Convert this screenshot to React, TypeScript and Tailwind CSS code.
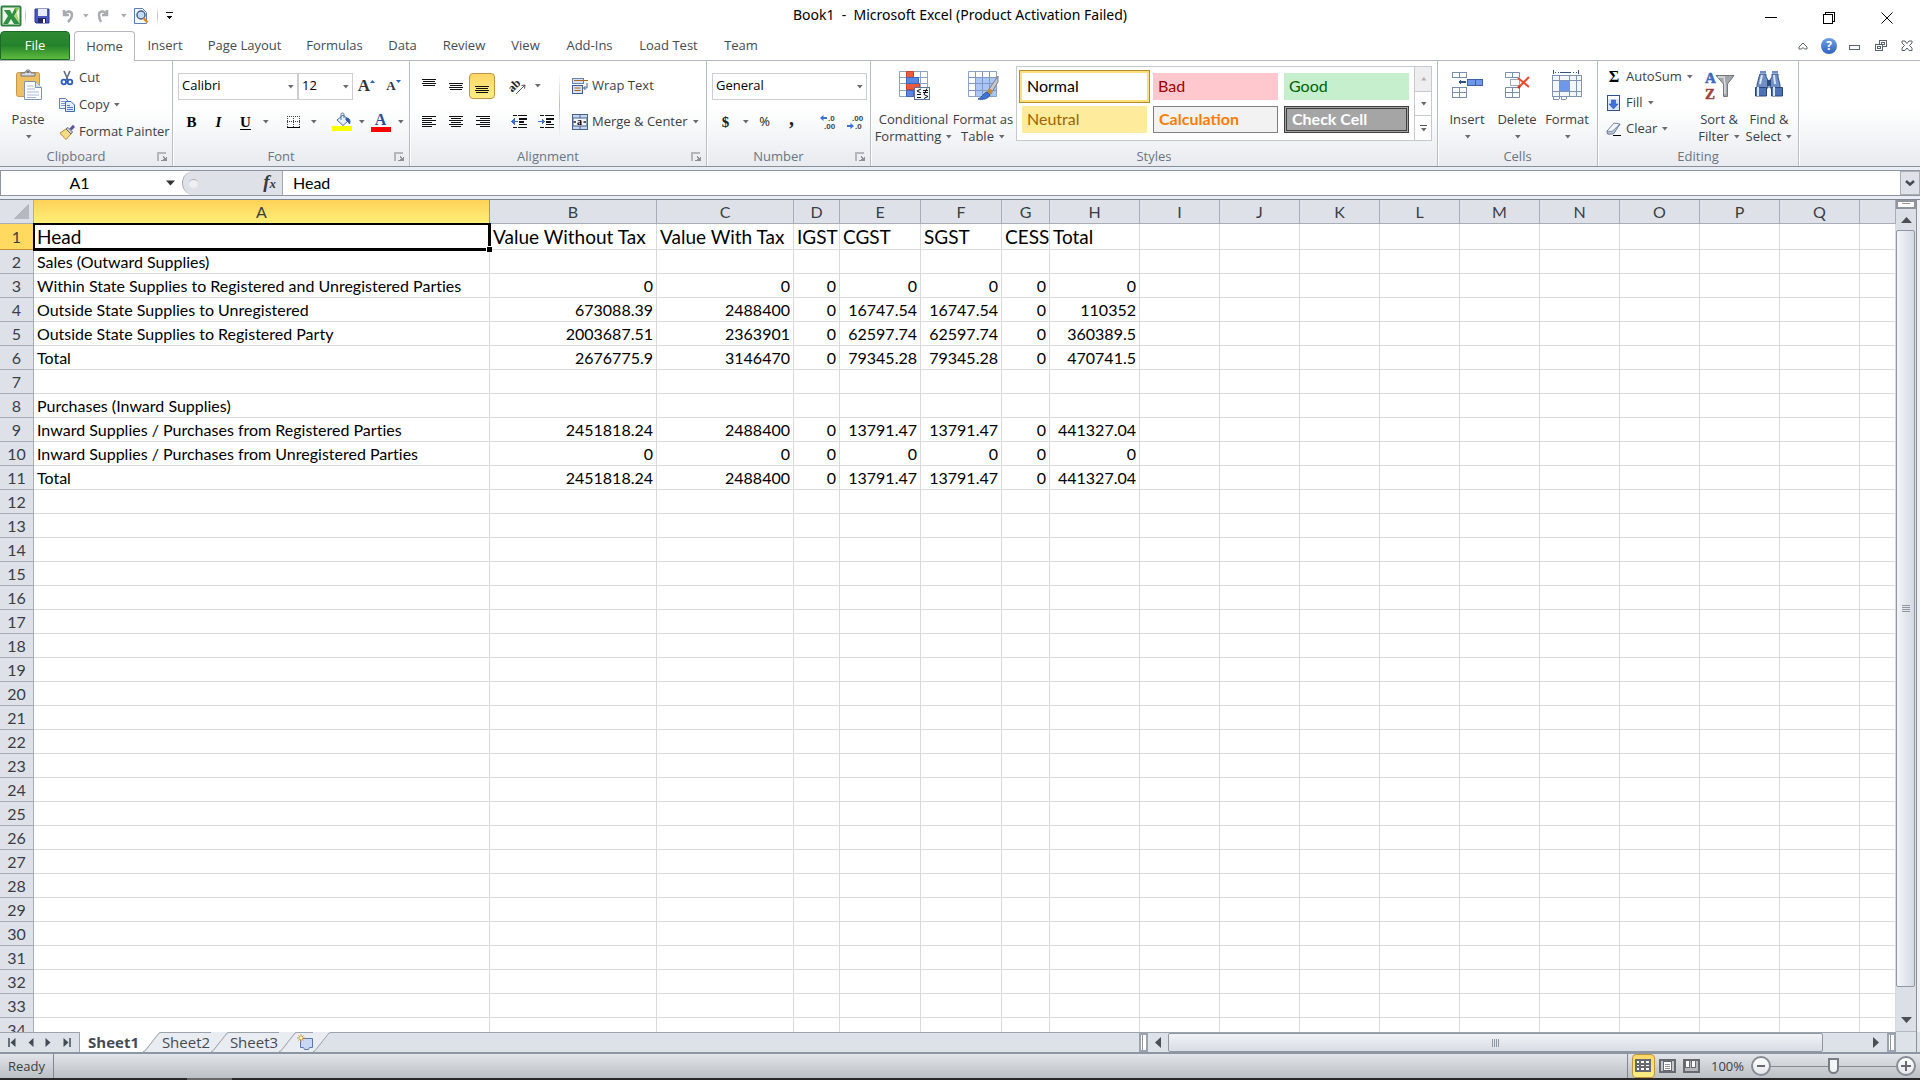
import React from 'react'

type IconProps = { children: React.ReactNode; w?: number; h?: number; crisp?: boolean }

const Icon: React.FC<IconProps> = ({ children, w = 16, h = 16, crisp }) => (
  <svg width={w} height={h} viewBox={`0 0 ${w} ${h}`} fill="none" className="shrink-0 overflow-visible" shapeRendering={crisp ? 'crispEdges' : undefined} aria-hidden>
    {children}
  </svg>
)

const Caret: React.FC<{ color?: string }> = ({ color = '#6a6a6a' }) => (
  <Icon w={7} h={4}>
    <path d="M1 0h5.6L3.8 3.4z" fill={color} />
  </Icon>
)

const Divider: React.FC<{ className?: string }> = ({ className = 'h-6' }) => (
  <span className={`w-px shrink-0 bg-linear-to-b from-transparent via-[#b9bec6] to-transparent ${className}`} />
)

// stacked horizontal strokes, used by the alignment buttons
const Lines: React.FC<{ rows: [number, number, number][] }> = ({ rows }) => (
  <Icon crisp>
    {rows.map(([x, y, w]) => (
      <rect key={y} x={x} y={y} width={w} height="1" fill="#111" />
    ))}
  </Icon>
)

const PasteIcon = () => (
  <Icon w={32} h={32}>
    <rect x="4.5" y="3.5" width="23" height="24" rx="2" fill="#efbf63" stroke="#c8964a" />
    <path d="M9 7V4h4c0-4 6-4 6 0h4v3z" fill="#d9dbe0" stroke="#6f747c" />
    <rect x="14.5" y="2" width="3" height="2" fill="#6f747c" />
    <path d="M12.500 12.500h11l6 6v12h-17z" fill="#fff" stroke="#7a94ba" />
    <path d="M23.500 12.500v6h6" fill="#d4e0f2" stroke="#7a94ba" />
    <path d="M15 17h6M15 20h8M15 23h12M15 26h12M15 28.500h9" stroke="#a6b9d8" />
  </Icon>
)

const CutIcon = () => (
  <Icon>
    <path d="M5 1l4 9M11 1L7 10" stroke="#5f6b80" strokeWidth="1.6" />
    <circle cx="4.800" cy="12" r="2.300" stroke="#2b5cc0" strokeWidth="1.800" />
    <circle cx="11" cy="12" r="2.300" stroke="#2b5cc0" strokeWidth="1.800" />
  </Icon>
)

const CopyIcon = () => (
  <Icon>
    <path d="M.5 1.500h6l3 3v7h-9z" fill="#eef4fd" stroke="#5b7fc0" />
    <path d="M2 4.500h4M2 6.500h5M2 8.500h5" stroke="#7b9bd6" />
    <path d="M6.500 4.500h5.500l3.500 3.500v6.500h-9z" fill="#e3ecfa" stroke="#3f68b5" />
    <path d="M8 8.500h3M8 10.500h6M8 12.500h6" stroke="#4d78c9" />
  </Icon>
)

const PainterIcon = () => (
  <Icon>
    <path d="M1 9l6-4 5 5-5 5.500C5 13 3 12 1 9z" fill="#f3dc85" stroke="#b48c34" />
    <path d="M7 5l2-1.500L13.500 8 12 10z" fill="#c9ccd3" stroke="#666b75" />
    <path d="M10.500 4.500L14 .8 16 3l-3.500 3.500z" fill="#5b5694" />
  </Icon>
)

const BordersIcon = () => (
  <Icon crisp>
    <path d="M1 2.500h13M1 7.500h13M1.500 2v11M7.500 2v11M13.500 2v11" stroke="#444" strokeDasharray="1 1" />
    <rect x="1" y="13" width="13" height="1" fill="#000" />
  </Icon>
)

const FillColorIcon = () => (
  <Icon w={20} h={20}>
    <path d="M5 8l6-5 6 5-6 5.500z" fill="#e8eff9" stroke="#4b6ea8" />
    <path d="M9 8V2.500c0-2 3-2 3 0V6" stroke="#4b6ea8" />
    <path d="M14 6c4 0 4.500 3 3.500 6-1-2-2-3-3.500-4z" fill="#2c5aa8" stroke="#2c5aa8" />
    <rect y="14" width="20" height="5" fill="#ffff00" />
  </Icon>
)

const OrientationIcon = () => (
  <Icon w={18} h={18}>
    <text x="0" y="12" transform="rotate(-45 6 10)" fontSize="12" fontWeight="700" fontFamily="Liberation Serif, serif" fill="#222">ab</text>
    <path d="M7 17l9-9M16 8l-3.500.5M16 8l-.5 3.500" stroke="#555" />
  </Icon>
)

const IndentIcon: React.FC<{ right?: boolean }> = ({ right }) => (
  <Icon crisp>
    <path d="M2 1.500h4M7 1.500h9M8 4.500h8M8 7.500h5M8 10.500h8M2 13.500h4M7 13.500h9" stroke="#111" />
    <path d="M8 5h8M8 8h5" stroke="#111" strokeWidth="2" />
    {right ? <path d="M0 7h4V4l3 3.500L4 11V8H0z" fill="#3b6fd0" /> : <path d="M7 7H4V4L0 7.500 4 11V8h3z" fill="#3b6fd0" />}
  </Icon>
)

const WrapIcon = () => (
  <Icon>
    <rect x=".5" y=".5" width="11" height="5" fill="#d5e1f2" stroke="#6a86b0" />
    <path d="M2 2.500h14" stroke="#b0651c" />
    <rect x=".5" y="7.500" width="10" height="8" fill="#d5e1f2" stroke="#3d5f93" />
    <path d="M2.500 10h6M2.500 12.500h6" stroke="#b0651c" />
    <path d="M15 5v5h-3M13.500 8L11.500 10l2 2" stroke="#3d5f93" />
  </Icon>
)

const MergeIcon = () => (
  <Icon>
    <rect x=".5" y=".5" width="15" height="15" fill="#c7d6ec" stroke="#45628f" />
    <path d="M8 1v3M8 12v3" stroke="#45628f" />
    <rect x="1" y="4" width="14" height="8" fill="#f4f7fc" stroke="#45628f" />
    <text x="5" y="11" fontSize="10" fontWeight="700" fontFamily="Liberation Serif, serif" fill="#000">a</text>
    <path d="M1.500 8H4M11.500 8H14" stroke="#222" strokeWidth="1.500" />
  </Icon>
)

const DecimalIcon: React.FC<{ more?: boolean }> = ({ more }) => (
  <Icon>
    <text x={more ? 8 : 5} y="7" fontSize="8" fontWeight="700" fontFamily="Liberation Sans, sans-serif" fill="#444">{more ? '.0' : '.00'}</text>
    <text x={more ? 4 : 8} y="15" fontSize="8" fontWeight="700" fontFamily="Liberation Sans, sans-serif" fill="#444">{more ? '.00' : '.0'}</text>
    {more ? <path d="M0 4l3.500-3v2H7v2H3.500v2z" fill="#3b6fd0" /> : <path d="M7 12L3.500 9v2H0v2h3.500v2z" fill="#3b6fd0" />}
  </Icon>
)

const CondFormatIcon = () => (
  <Icon w={32} h={32}>
    <path d="M1.500 2.500h28v25h-28zM1.500 8.500h28M1.500 14.500h28M1.500 21.500h28M8.500 2.500v25M15.500 2.500v25M22.500 2.500v25" fill="#fff" stroke="#8ea3c4" />
    <path d="M8.500 2.500h7v6h-7zM8.500 14.500h13v6h-13z" fill="#f0583c" stroke="#c8402c" />
    <path d="M8.500 8.500h12v6h-12zM8.500 21.500h7v6h-7z" fill="#5b86e8" stroke="#3f66be" />
    <rect x="16.500" y="18.500" width="15" height="12" fill="#f5f8fd" stroke="#5d7295" />
    <path d="M23 20l-4 2 4 2M19 25.500h4M19 28.500h4M25 21.500h5M25 23.500h5M29 19.500l-3 6M26 25.500l4 2-4 2" stroke="#111" />
  </Icon>
)

const FormatTableIcon = () => (
  <Icon w={32} h={32}>
    <path d="M1.500 2.500h28v25h-28z" fill="#fff" stroke="#8ea3c4" />
    <path d="M8 9h21v18H8z" fill="#a9c6f7" />
    <path d="M1.500 8.500h28M1.500 14.500h28M1.500 21.500h28M8.500 2.500v25M15.500 2.500v25M22.500 2.500v25" stroke="#8099c4" />
    <path d="M31 7L22 20l3 3 6-10z" fill="#c3c7cd" stroke="#777d87" />
    <path d="M22 19l4 3-2 4-4-3z" fill="#c08a3e" />
    <path d="M20 23l3 3c-2 4-7 5-12 4 4-1 5-6 9-7z" fill="#3f76d6" stroke="#2b549f" />
  </Icon>
)

const InsertCellsIcon = () => (
  <Icon w={32} h={32} crisp>
    <path d="M1.500 3.500h14v5h-14zM8.500 3.500v5M1.500 18.500h14v10h-14zM1.500 23.500h14M8.500 18.500v10" fill="#fff" stroke="#7a8fa9" />
    <path d="M16.500 10.500h15v6h-15zM24 10.500v6" fill="#6f97ea" stroke="#3c61a8" />
    <path d="M7 13l3-3v2h5v2h-5v2z" fill="#34527f" />
  </Icon>
)

const DeleteCellsIcon = () => (
  <Icon w={32} h={32}>
    <path d="M4.500 3.500h14v5h-14zM11.500 3.500v5M4.500 18.500h14v10h-14zM4.500 23.500h14M11.500 18.500v10" fill="#fff" stroke="#7a8fa9" />
    <path d="M9.500 10.500h9v6h-9z" stroke="#34527f" strokeDasharray="1 1" />
    <path d="M17 9l11 9M28 8L18 18" stroke="#f04a2c" strokeWidth="2" />
    <circle cx="18" cy="18" r="1.500" fill="#e12d12" />
  </Icon>
)

const FormatCellsIcon = () => (
  <Icon w={32} h={32} crisp>
    <path d="M2 1v4M27 1v4M9 3h11" stroke="#34527f" />
    <path d="M4 3h22" stroke="#34527f" strokeDasharray="1 2" />
    <path d="M1.500 6.500h29v21h-29zM1.500 11.500h29M1.500 22.500h29M8.500 6.500v21M18.500 6.500v21M25.500 6.500v21" fill="#f3f6fb" stroke="#8093b0" />
    <rect x="9" y="12" width="9" height="10" fill="#6f97ea" />
    <path d="M2 28v2h6l1-2M10 28v2h5l1-2" stroke="#8093b0" />
  </Icon>
)

const FillDownIcon = () => (
  <Icon>
    <rect x="1.500" y=".5" width="12" height="15" fill="#dbe7fb" stroke="#2f4f91" />
    <rect x="2" y="1" width="11" height="3" fill="#fff" />
    <path d="M5.500 5h4v4H12l-4.500 5L3 9h2.500z" fill="#3d72e0" stroke="#2a52ab" strokeWidth=".6" />
  </Icon>
)

const ClearIcon = () => (
  <Icon>
    <path d="M1 10l7-8 6 1-6.500 9.500-6 .5z" fill="#f2f5fa" stroke="#7c8798" />
    <path d="M1 10l5 .5 8-7.500-6.500 10H2z" fill="#b6c4da" stroke="#66748b" strokeWidth=".7" />
    <path d="M7 14.500h8" stroke="#000" />
  </Icon>
)

const SortFilterIcon = () => (
  <Icon w={32} h={32}>
    <text x="2" y="14" fontSize="15" fontWeight="700" fontFamily="Liberation Serif, serif" fill="#3e68ba" stroke="#3e68ba" strokeWidth=".5">A</text>
    <text x="2" y="30" fontSize="15" fontWeight="700" fontFamily="Liberation Serif, serif" fill="#a0403c" stroke="#a0403c" strokeWidth=".5">Z</text>
    <path d="M13 6.500h18L24.500 15v12.500h-4V15z" fill="#a2a5a9" stroke="#74777c" />
    <path d="M15 8h6l1 8v9" stroke="#dcdee1" strokeWidth="1.500" />
  </Icon>
)

const BinocularsIcon = () => (
  <Icon w={32} h={32}>
    <path d="M7 5h6v3l2 3v8H4v-3l2-8zM19 5h6v3l2 8v3H17v-8l2-3z" fill="#6f8fc6" stroke="#34548e" />
    <rect x="14" y="11" width="4" height="6" fill="#2f4a7d" />
    <path d="M2.500 18.500h11v8.500h-11zM18.500 18.500h11v8.500h-11z" fill="#4c71b4" stroke="#2b467c" />
    <path d="M5 18v9M21 18v9M9 6l-2 9M21 6l1 9" stroke="#d9e5f8" strokeWidth="2" />
    <path d="M7 3h6M19 3h6" stroke="#6f8fc6" strokeWidth="2" />
  </Icon>
)

const ribbonTabs = [
  { label: 'Insert', width: 'w-[60px]' },
  { label: 'Page Layout', width: 'w-[99px]' },
  { label: 'Formulas', width: 'w-[81px]' },
  { label: 'Data', width: 'w-[55px]' },
  { label: 'Review', width: 'w-[68px]' },
  { label: 'View', width: 'w-[55px]' },
  { label: 'Add-Ins', width: 'w-[73px]' },
  { label: 'Load Test', width: 'w-[85px]' },
  { label: 'Team', width: 'w-[60px]' },
]

const columns = [
  { name: 'A', width: 'w-[456px]' },
  { name: 'B', width: 'w-[167px]' },
  { name: 'C', width: 'w-[137px]' },
  { name: 'D', width: 'w-[46px]' },
  { name: 'E', width: 'w-[81px]' },
  { name: 'F', width: 'w-[81px]' },
  { name: 'G', width: 'w-[48px]' },
  { name: 'H', width: 'w-[90px]' },
  ...['I', 'J', 'K', 'L', 'M', 'N', 'O', 'P', 'Q'].map((name) => ({ name, width: 'w-20' })),
  { name: '', width: '' },
]

const sheet: Record<number, string[]> = {
  1: ['Head', 'Value Without Tax', 'Value With Tax', 'IGST', 'CGST', 'SGST', 'CESS', 'Total'],
  2: ['Sales (Outward Supplies)'],
  3: ['Within State Supplies to Registered and Unregistered Parties', '0', '0', '0', '0', '0', '0', '0'],
  4: ['Outside State Supplies to Unregistered', '673088.39', '2488400', '0', '16747.54', '16747.54', '0', '110352'],
  5: ['Outside State Supplies to Registered Party', '2003687.51', '2363901', '0', '62597.74', '62597.74', '0', '360389.5'],
  6: ['Total', '2676775.9', '3146470', '0', '79345.28', '79345.28', '0', '470741.5'],
  8: ['Purchases (Inward Supplies)'],
  9: ['Inward Supplies / Purchases from Registered Parties', '2451818.24', '2488400', '0', '13791.47', '13791.47', '0', '441327.04'],
  10: ['Inward Supplies / Purchases from Unregistered Parties', '0', '0', '0', '0', '0', '0', '0'],
  11: ['Total', '2451818.24', '2488400', '0', '13791.47', '13791.47', '0', '441327.04'],
}

const rowNumbers = Array.from({ length: 34 }, (_, i) => i + 1)

const Group: React.FC<{ title: string; width: string; launcher?: boolean; children: React.ReactNode }> = ({ title, width, launcher, children }) => (
  <section className={`flex shrink-0 flex-col border-r border-[#b9bdc4] shadow-[1px_0_0_#fff] ${width}`} aria-label={title}>
    <div className="flex h-[85px]">{children}</div>
    <div className="flex h-5 items-center pt-px text-[#6b7484]">
      <span className="flex-1 text-center">{title}</span>
      {launcher && (
        <button type="button" aria-label={`${title} options`} className="flex w-5 justify-center">
          <Icon w={10} h={10} crisp>
            <path d="M0 9V0h9v2H2v7z" fill="#b3b6bb" />
            <path d="M4 9h6V4L8 6 6 4v2l2 1-4 1z" fill="#8d9096" />
          </Icon>
        </button>
      )}
    </div>
  </section>
)

const BigButton: React.FC<{ icon: React.ReactNode; lines: string[]; width: string }> = ({ icon, lines, width }) => (
  <button type="button" className={`flex shrink-0 flex-col items-center pt-2 ${width}`}>
    {icon}
    <span className="mt-[10px] leading-[17px] whitespace-nowrap">{lines[0]}</span>
    <span className="flex h-[17px] items-center gap-1 leading-[17px]">
      {lines[1]}
      <Caret />
    </span>
  </button>
)

const SmallButton: React.FC<{ icon: React.ReactNode; label: string; caret?: boolean; height?: string }> = ({ icon, label, caret, height = 'h-[27px]' }) => (
  <button type="button" className={`flex items-center gap-1 whitespace-nowrap ${height}`}>
    {icon}
    {label}
    {caret && <Caret />}
  </button>
)

const Tool: React.FC<{ label: string; width?: string; children: React.ReactNode }> = ({ label, width = 'w-[27px]', children }) => (
  <button type="button" aria-label={label} className={`flex h-[26px] shrink-0 items-center justify-center ${width}`}>
    {children}
  </button>
)

const Combo: React.FC<{ label: string; value: string; width: string }> = ({ label, value, width }) => (
  <div className={`relative h-[27px] shrink-0 ${width}`}>
    <select aria-label={label} defaultValue={value} className="size-full appearance-none border border-[#ccced1] bg-white pb-0.5 pl-[3px] text-black">
      <option>{value}</option>
    </select>
    <span className="pointer-events-none absolute top-3 right-1">
      <Caret />
    </span>
  </div>
)

const QuickAccess = () => (
  <div className="flex items-center pb-1">
    <Icon w={24} h={24}>
      <rect x="1.500" y="2.500" width="19" height="19" rx="1" fill="#eaf5e6" stroke="#2f7f3f" strokeWidth="2" />
      <path d="M4 6h6l2 4 3-6h4l-5 8 6 8h-6l-3-5-3 5H3l5-8z" fill="#2f8f43" />
      <path d="M15 4h4l-5 8 6 8" fill="#9bd04e" opacity=".8" />
    </Icon>
    <Divider className="mx-px h-5" />
    <Tool label="Save" width="w-[30px]">
      <Icon>
        <path d="M1 1h14v14H2l-1-1z" fill="#4b57c4" stroke="#2d3694" />
        <rect x="4" y="1" width="9" height="7" fill="#e8ecfa" />
        <rect x="4" y="10" width="8" height="5" fill="#23285f" />
        <rect x="9" y="11" width="2" height="4" fill="#fff" />
      </Icon>
    </Tool>
    <Tool label="Undo" width="w-5">
      <Icon>
        <path d="M5 2v5h5M5.500 6.500C8 2 13 3 13 7c0 3-2 5-4 7" stroke="#a9abae" strokeWidth="2.500" />
      </Icon>
    </Tool>
    <Tool label="Undo list" width="w-4">
      <Caret color="#a9abae" />
    </Tool>
    <Tool label="Redo" width="w-5">
      <Icon>
        <path d="M12 2v5H7M11.500 6.500C9 2 4 3 4 7c0 3 1 5 2 7" stroke="#a9abae" strokeWidth="2.500" />
      </Icon>
    </Tool>
    <Tool label="Redo list" width="w-5">
      <Caret color="#a9abae" />
    </Tool>
    <Tool label="Print preview" width="w-4">
      <Icon>
        <path d="M1.500.5h8l4 4v11h-12z" fill="#f6f9fe" stroke="#5b7fb2" />
        <circle cx="8" cy="7" r="4" fill="#c5dbf5" stroke="#44618e" strokeWidth="1.500" />
        <path d="M10.500 10l4 4.500" stroke="#d58b2a" strokeWidth="2.500" />
      </Icon>
    </Tool>
    <Divider className="mx-2 h-5" />
    <Tool label="Customize toolbar" width="w-2">
      <Icon w={8} h={8} crisp>
        <path d="M0 0h7v1H0zM0 4h7L3.500 7z" fill="#111" />
      </Icon>
    </Tool>
  </div>
)

const TitleBar = () => (
  <header className="grid h-[31px] shrink-0 grid-cols-[1fr_auto_1fr]">
    <QuickAccess />
    <h1 className="pt-[3px] font-['Noto_Sans',sans-serif] text-[14px] leading-6 whitespace-pre text-black">{'Book1  -  Microsoft Excel (Product Activation Failed)'}</h1>
    <div className="flex justify-end pr-1 text-black">
      <button type="button" aria-label="Minimize" className="flex h-9 w-[58px] items-center justify-center">
        <Icon w={12} h={12} crisp>
          <path d="M0 5.500h12" stroke="currentColor" />
        </Icon>
      </button>
      <button type="button" aria-label="Restore" className="flex h-9 w-[58px] items-center justify-center">
        <Icon w={12} h={12} crisp>
          <path d="M.5 2.500h9v9h-9zM2.500 2V.5h9v9H10" stroke="currentColor" />
        </Icon>
      </button>
      <button type="button" aria-label="Close" className="flex h-9 w-[58px] items-center justify-center">
        <Icon w={12} h={12}>
          <path d="M.5.5l11 11M11.500.5l-11 11" stroke="currentColor" />
        </Icon>
      </button>
    </div>
  </header>
)

const RibbonTabs = () => (
  <nav className="flex h-[30px] shrink-0 border-b border-[#b5b9bf] text-[#444b55]">
    <button type="button" className="w-[70px] rounded-t-sm border border-[#1c6a28] bg-linear-to-b from-[#2f8a34] via-[#23832a] to-[#5cbb3c] text-white">
      File
    </button>
    <button type="button" className="-mb-px ml-1 h-[30px] w-[61px] rounded-t-sm border border-b-0 border-[#b5b9bf] bg-white">
      Home
    </button>
    {ribbonTabs.map((tab) => (
      <button key={tab.label} type="button" className={`pt-px whitespace-nowrap ${tab.width}`}>
        {tab.label}
      </button>
    ))}
    <div className="ml-auto flex items-center text-[#5a6270]">
      <Tool label="Collapse ribbon" width="w-[26px]">
        <Icon w={10} h={8}>
          <path d="M1 5l4-4 4 4v2H6.500L5 5.500 3.500 7H1z" stroke="currentColor" />
        </Icon>
      </Tool>
      <Tool label="Help" width="w-[26px]">
        <span className="flex size-4 items-center justify-center rounded-full bg-linear-to-b from-[#6f9ee8] to-[#2f62bd] text-[12px] font-bold text-white">?</span>
      </Tool>
      <Tool label="Minimize workbook" width="w-[26px]">
        <Icon w={12} h={12} crisp>
          <rect x=".5" y="5.500" width="10" height="4" stroke="currentColor" />
        </Icon>
      </Tool>
      <Tool label="Restore workbook" width="w-[26px]">
        <Icon w={12} h={12} crisp>
          <path d="M.5 4.500h7v6h-7zM2.500 6.500h3v2h-3zM4.500 4V.5h7v6H8M6.500 4V2.500h3v2H8" stroke="currentColor" />
        </Icon>
      </Tool>
      <Tool label="Close workbook" width="w-[26px]">
        <Icon w={12} h={12}>
          <path d="M1 1h3l2 2.500L8 1h3v2L8.500 5.500 11 8v2.500H8L6 8l-2 2.500H1V8l2.500-2.500L1 3z" stroke="currentColor" />
        </Icon>
      </Tool>
    </div>
  </nav>
)

const cellStyles = [
  { name: 'Normal', style: 'bg-white text-black outline-1 outline-offset-2 outline-[#b98a2c] ring-2 ring-[#fbe07c]' },
  { name: 'Bad', style: 'bg-[#ffc7ce] text-[#9c0006]' },
  { name: 'Good', style: 'bg-[#c6efce] text-[#006100]' },
  { name: 'Neutral', style: 'bg-[#ffeb9c] text-[#9c6500]' },
  { name: 'Calculation', style: 'border border-[#7f7f7f] bg-[#f2f2f2] font-bold text-[#fa7d00]' },
  { name: 'Check Cell', style: 'border-3 border-double border-[#3f3f3f] bg-[#a5a5a5] font-bold text-white' },
]

const Ribbon = () => (
  <div className="flex h-[106px] shrink-0 overflow-hidden border-b border-[#8b9097] bg-linear-to-b from-white from-45% to-[#e8ebef] text-[#3b3f46]">
    <Group title="Clipboard" width="w-[173px]" launcher>
      <BigButton icon={<PasteIcon />} lines={['Paste', '']} width="w-14" />
      <div className="flex flex-col items-start pt-[3px] pl-[3px]">
        <SmallButton icon={<CutIcon />} label="Cut" />
        <SmallButton icon={<CopyIcon />} label="Copy" caret />
        <SmallButton icon={<PainterIcon />} label="Format Painter" />
      </div>
    </Group>

    <Group title="Font" width="w-[237px]" launcher>
      <div className="flex flex-col gap-[9px] pt-3 pl-[5px]">
        <div className="flex">
          <Combo label="Font" value="Calibri" width="w-[120px]" />
          <Combo label="Font size" value="12" width="w-[55px]" />
          <Tool label="Grow font">
            <span className="font-['Liberation_Serif',serif] text-[17px] font-bold text-[#333]">A</span>
            <Icon w={5} h={14}>
              <path d="M0 4l2.500-3L5 4z" fill="#2f62bd" />
            </Icon>
          </Tool>
          <Tool label="Shrink font">
            <span className="font-['Liberation_Serif',serif] text-[13px] font-bold text-[#333]">A</span>
            <Icon w={5} h={14}>
              <path d="M0 1h5L2.500 4z" fill="#2f62bd" />
            </Icon>
          </Tool>
        </div>
        <div className="flex items-center font-['Liberation_Serif',serif] text-[15px] font-bold text-black">
          <Tool label="Bold">B</Tool>
          <Tool label="Italic">
            <i>I</i>
          </Tool>
          <Tool label="Underline">
            <u className="underline-offset-2">U</u>
          </Tool>
          <Tool label="Underline style" width="w-3">
            <Caret />
          </Tool>
          <Divider className="mx-1" />
          <Tool label="Borders">
            <BordersIcon />
          </Tool>
          <Tool label="Border style" width="w-3">
            <Caret />
          </Tool>
          <Divider className="mx-1" />
          <Tool label="Fill color">
            <FillColorIcon />
          </Tool>
          <Tool label="Fill colors" width="w-3">
            <Caret />
          </Tool>
          <Tool label="Font color">
            <span className="w-5 border-b-5 border-[#ff0000] text-[16px] leading-[15px] text-[#2c4f93]">A</span>
          </Tool>
          <Tool label="Font colors" width="w-3">
            <Caret />
          </Tool>
        </div>
      </div>
    </Group>

    <Group title="Alignment" width="w-[297px]" launcher>
      <div className="flex flex-col gap-[10px] pt-3 pl-[5px]">
        <div className="flex items-center">
          <Tool label="Top align">
            <Lines rows={[[1, 1, 14], [2, 3, 12], [1, 5, 14], [2, 7, 12]]} />
          </Tool>
          <Tool label="Middle align">
            <Lines rows={[[1, 5, 14], [2, 7, 12], [1, 9, 14], [2, 11, 12]]} />
          </Tool>
          <button type="button" aria-label="Bottom align" className="flex size-[26px] items-center justify-center rounded-sm border border-[#c2953c] bg-linear-to-b from-[#fcd668] to-[#ffee83]">
            <Lines rows={[[1, 8, 14], [2, 10, 12], [1, 12, 14], [2, 14, 12]]} />
          </button>
          <Divider className="mx-1" />
          <Tool label="Orientation">
            <OrientationIcon />
          </Tool>
          <Tool label="Orientation options" width="w-3">
            <Caret />
          </Tool>
        </div>
        <div className="flex items-center">
          <Tool label="Align left">
            <Lines rows={[[1, 2, 14], [1, 4, 10], [1, 6, 14], [1, 8, 10], [1, 10, 14], [1, 12, 10]]} />
          </Tool>
          <Tool label="Center">
            <Lines rows={[[1, 2, 14], [3, 4, 10], [1, 6, 14], [3, 8, 10], [1, 10, 14], [3, 12, 10]]} />
          </Tool>
          <Tool label="Align right">
            <Lines rows={[[1, 2, 14], [5, 4, 10], [1, 6, 14], [5, 8, 10], [1, 10, 14], [5, 12, 10]]} />
          </Tool>
          <Divider className="mx-1" />
          <Tool label="Decrease indent">
            <IndentIcon />
          </Tool>
          <Tool label="Increase indent">
            <IndentIcon right />
          </Tool>
        </div>
      </div>
      <Divider className="mt-3 h-[64px]" />
      <div className="flex flex-col gap-[10px] pt-3 pl-3">
        <SmallButton icon={<WrapIcon />} label="Wrap Text" height="h-[26px]" />
        <SmallButton icon={<MergeIcon />} label="Merge & Center" caret height="h-[26px]" />
      </div>
    </Group>

    <Group title="Number" width="w-[164px]" launcher>
      <div className="flex flex-col gap-[9px] pt-3 pl-[5px]">
        <Combo label="Number format" value="General" width="w-[155px]" />
        <div className="flex items-center text-[#222]">
          <Tool label="Accounting format">
            <span className="font-['Liberation_Serif',serif] text-[15px] font-bold">$</span>
          </Tool>
          <Tool label="Currencies" width="w-3">
            <Caret />
          </Tool>
          <Tool label="Percent style">%</Tool>
          <Tool label="Comma style">
            <span className="pb-2 font-['Liberation_Serif',serif] text-[20px] font-bold">,</span>
          </Tool>
          <Divider className="mx-1" />
          <Tool label="Increase decimal">
            <DecimalIcon more />
          </Tool>
          <Tool label="Decrease decimal">
            <DecimalIcon />
          </Tool>
        </div>
      </div>
    </Group>

    <Group title="Styles" width="w-[567px]">
      <div className="flex w-[145px] shrink-0 pl-1.5">
        <BigButton icon={<CondFormatIcon />} lines={['Conditional', 'Formatting']} width="w-[73px]" />
        <BigButton icon={<FormatTableIcon />} lines={['Format as', 'Table']} width="w-[66px]" />
      </div>
      <div className="mt-[5px] flex h-[75px] border border-[#c6c9ce] bg-white font-['Lato',sans-serif] text-[16px]">
        <div className="grid grid-cols-[125px_125px_125px] grid-rows-[27px_27px] gap-1.5 px-[5px] pt-1.5">
          {cellStyles.map((s) => (
            <button key={s.name} type="button" className={`flex items-center px-[5px] pb-px ${s.style}`}>
              {s.name}
            </button>
          ))}
        </div>
        <div className="flex w-[17px] flex-col divide-y divide-[#c6c9ce] border-l border-[#c6c9ce]">
          <button type="button" aria-label="Previous styles" className="flex flex-1 items-center justify-center bg-[#eeeeee]">
            <Icon w={7} h={4}>
              <path d="M1 3.500h5.600L3.800 0z" fill="#b0b2b5" />
            </Icon>
          </button>
          <button type="button" aria-label="Next styles" className="flex flex-1 items-center justify-center">
            <Caret />
          </button>
          <button type="button" aria-label="More styles" className="flex flex-1 flex-col items-center justify-center gap-0.5">
            <span className="h-px w-[7px] bg-[#555]" />
            <Caret />
          </button>
        </div>
      </div>
    </Group>

    <Group title="Cells" width="w-40">
      <div className="flex pl-1">
        <BigButton icon={<InsertCellsIcon />} lines={['Insert', '']} width="w-[50px]" />
        <BigButton icon={<DeleteCellsIcon />} lines={['Delete', '']} width="w-[50px]" />
        <BigButton icon={<FormatCellsIcon />} lines={['Format', '']} width="w-[50px]" />
      </div>
    </Group>

    <Group title="Editing" width="w-[201px]">
      <div className="flex w-24 shrink-0 flex-col items-start pt-[3px] pl-2">
        <SmallButton
          icon={<span className="w-4 text-center font-['Liberation_Serif',serif] text-[16px] font-bold text-black">Σ</span>}
          label="AutoSum"
          caret
          height="h-[26px]"
        />
        <SmallButton icon={<FillDownIcon />} label="Fill" caret height="h-[26px]" />
        <SmallButton icon={<ClearIcon />} label="Clear" caret height="h-[26px]" />
      </div>
      <BigButton icon={<SortFilterIcon />} lines={['Sort &', 'Filter']} width="w-[50px]" />
      <BigButton icon={<BinocularsIcon />} lines={['Find &', 'Select']} width="w-[50px]" />
    </Group>
  </div>
)

const FormulaBar = () => (
  <div className="flex h-[33px] shrink-0 flex-col border-b border-[#80858f] bg-[#e9edf5] pt-[3px] font-['Lato',sans-serif] text-[16px] text-black">
    <div className="flex h-[26px] items-stretch border-y border-[#8f949d] bg-white">
      <input aria-label="Name box" defaultValue="A1" className="w-[158px] border-l border-[#8f949d] text-center" />
      <button type="button" aria-label="Names" className="flex w-6 items-center justify-center">
        <Icon w={9} h={6}>
          <path d="M0 .5h9L4.500 5.500z" fill="#333" />
        </Icon>
      </button>
      <div className="flex w-[101px] items-center justify-between rounded-l-full border-x border-[#a4a9b1] bg-[#dee2e8] pr-1.5 pl-1.5">
        <span className="size-[9px] rounded-full border-t border-[#a9adb4] bg-[#eef0f3]" />
        <button type="button" aria-label="Insert function" className="font-['Liberation_Serif',serif] text-[19px] leading-5 font-bold text-[#3a3a3a] italic">
          f<span className="text-[13px]">x</span>
        </button>
      </div>
      <input aria-label="Formula" defaultValue="Head" className="min-w-0 flex-1 pl-2.5" />
      <button type="button" aria-label="Expand formula bar" className="flex w-5 items-center justify-center border border-[#a9aeb6] bg-[#dee2e8]">
        <Icon w={10} h={6}>
          <path d="M1 1l4 3.500L9 1" stroke="#444b55" strokeWidth="2.500" />
        </Icon>
      </button>
    </div>
  </div>
)

const Grid = () => (
  <div className="min-w-0 flex-1 overflow-hidden bg-white">
    <table className="w-full table-fixed border-separate border-spacing-0 font-['Lato',sans-serif] text-[16px] text-black [font-variant-ligatures:none]">
      <colgroup>
        <col className="w-[34px]" />
        {columns.map((c) => (
          <col key={c.name} className={c.width} />
        ))}
      </colgroup>
      <thead>
        <tr className="h-6 text-[#3a3e45]">
          <th className="h-6 border-r border-b border-[#a9aeb6] bg-[#dee2e8] p-0">
            <span className="mr-1 ml-auto block size-[15px] bg-linear-to-br from-transparent from-50% to-[#b4b8bf] to-50%" />
          </th>
          {columns.map((c) => (
            <th
              key={c.name}
              className={`border-r border-b p-0 leading-5 font-normal ${
                c.name === 'A' ? 'border-[#c4903a] bg-linear-to-b from-[#ffd157] to-[#ffef78]' : 'border-[#a9aeb6] bg-[#dee2e8]'
              }`}
            >
              {c.name}
            </th>
          ))}
        </tr>
      </thead>
      <tbody>
        {rowNumbers.map((n) => (
          <tr key={n} className={n === 1 ? 'h-[26px] text-[19px]' : 'h-6'}>
            <th
              className={`border-r border-b p-0 pt-px text-center text-[16px] leading-5 font-normal text-[#3a3e45] ${
                n === 1 ? 'border-[#c4903a] bg-[#ffd960]' : 'border-[#a9aeb6] bg-[#dee2e8]'
              }`}
            >
              {n}
            </th>
            {columns.map((c, i) => (
              <td
                key={c.name}
                className={`relative border-r border-b border-[#d9dadb] p-0 px-[3px] leading-5 whitespace-nowrap ${i > 0 && n > 1 ? 'text-right' : ''}`}
              >
                {sheet[n]?.[i]}
                {n === 1 && i === 0 && (
                  <span className="pointer-events-none absolute -top-px -right-0.5 -bottom-0.5 -left-px z-10 border-2 border-r-3 border-b-3 border-black">
                    <span className="absolute -right-1 -bottom-1 size-[6px] border-t border-l border-white bg-black" />
                  </span>
                )}
              </td>
            ))}
          </tr>
        ))}
      </tbody>
    </table>
  </div>
)

const VerticalScroll = () => (
  <div className="flex w-[21px] shrink-0 flex-col border-r border-[#8b9097] bg-[#dbdfe6]">
    <span className="h-[9px] border-2 border-[#8f949d] bg-white px-1 py-px">
      <span className="block h-px bg-[#8f949d]" />
    </span>
    <button type="button" aria-label="Scroll up" className="flex h-[21px] items-center justify-center">
      <Icon w={11} h={6}>
        <path d="M0 6h11L5.500 0z" fill="#4a4e55" />
      </Icon>
    </button>
    <span className="mr-px flex flex-1 flex-col items-center justify-center gap-px rounded-xs border border-[#8f97a3] bg-linear-to-r from-[#f3f5f8] to-[#d5dae2]">
      <span className="h-px w-2 bg-[#8f97a3]" />
      <span className="h-px w-2 bg-[#8f97a3]" />
      <span className="h-px w-2 bg-[#8f97a3]" />
      <span className="h-px w-2 bg-[#8f97a3]" />
    </span>
    <button type="button" aria-label="Scroll down" className="flex h-[45px] items-end justify-center border-b border-[#b3b8c0] pb-2">
      <Icon w={11} h={6}>
        <path d="M0 0h11L5.500 6z" fill="#4a4e55" />
      </Icon>
    </button>
  </div>
)

const Slant: React.FC<{ left: string; right: string }> = ({ left, right }) => (
  <Icon w={18} h={20}>
    <path d="M0 0h17L0 20z" fill={left} />
    <path d="M18 0L2 20h16z" fill={right} />
    <path d="M0 19.500c2 0 2-1 3-2L16 1l2-.5" stroke="#9da3ac" />
  </Icon>
)

const SheetTabs = () => (
  <div className="flex h-[22px] shrink-0 border-b-2 border-[#8d96a3] bg-[#dde1e8] text-[15px] text-[#444b55]">
    <div className="flex w-20 items-center justify-around border-t border-r border-[#9da3ac] px-1">
      {['First', 'Previous', 'Next', 'Last'].map((name, i) => (
        <button key={name} type="button" aria-label={`${name} sheet`}>
          <Icon w={9} h={9}>
            {i < 2 ? <path d="M7.500 0v9L2.500 4.500z" fill="#444b55" /> : <path d="M1.500 0v9l5-4.500z" fill="#444b55" />}
            {i === 0 && <path d="M1 0v9" stroke="#444b55" strokeWidth="1.500" />}
            {i === 3 && <path d="M8 0v9" stroke="#444b55" strokeWidth="1.500" />}
          </Icon>
        </button>
      ))}
    </div>
    <button type="button" className="w-[63px] bg-white pl-1 leading-5 font-bold">
      Sheet1
    </button>
    <Slant left="#ffffff" right="#e9ecf0" />
    <button type="button" className="w-[50px] border-t border-[#9da3ac] bg-[#e9ecf0] pb-0.5 leading-4">
      Sheet2
    </button>
    <Slant left="#e9ecf0" right="#e9ecf0" />
    <button type="button" className="w-[50px] border-t border-[#9da3ac] bg-[#e9ecf0] pb-0.5 leading-4">
      Sheet3
    </button>
    <Slant left="#e9ecf0" right="#e9ecf0" />
    <button type="button" aria-label="Insert worksheet" className="border-t border-[#9da3ac] bg-[#e9ecf0]">
      <Icon w={16} h={17}>
        <path d="M3.500 4.500h12v9h-3l-1 2h-4l-1-2h-3z" fill="#c9d8f2" stroke="#5b78ad" />
        <path d="M4 0v8M0 4h8M1.500 1.500l5 5M6.500 1.500l-5 5" stroke="#dc9426" />
        <circle cx="4" cy="4" r="1.500" fill="#fff3c4" />
      </Icon>
    </button>
    <Slant left="#e9ecf0" right="#dde1e8" />
    <div className="min-w-0 flex-1 border-t border-[#9da3ac]" />
    <div className="flex w-[757px] border-t border-[#9da3ac]">
      <span className="w-[9px] border-2 border-[#9da3ac] bg-white px-px">
        <span className="block h-full w-px bg-[#8f949d]" />
      </span>
      <button type="button" aria-label="Scroll left" className="flex w-5 items-center justify-center">
        <Icon w={6} h={11}>
          <path d="M6 0v11L0 5.500z" fill="#4a4e55" />
        </Icon>
      </button>
      <span className="flex flex-1 items-center justify-center gap-px rounded-xs border border-[#8f97a3] bg-linear-to-b from-[#f0f2f6] to-[#d9dde4]">
        <span className="h-2 w-px bg-[#8f97a3]" />
        <span className="h-2 w-px bg-[#8f97a3]" />
        <span className="h-2 w-px bg-[#8f97a3]" />
        <span className="h-2 w-px bg-[#8f97a3]" />
      </span>
      <button type="button" aria-label="Scroll right" className="flex w-16 items-center justify-end pr-2">
        <Icon w={6} h={11}>
          <path d="M0 0v11l6-5.500z" fill="#4a4e55" />
        </Icon>
      </button>
      <span className="w-[9px] border-2 border-[#9da3ac] bg-white px-px">
        <span className="block h-full w-px bg-[#8f949d]" />
      </span>
    </div>
    <div className="w-[21px] border-r border-[#8b9097]" />
    <div className="w-[3px]" />
  </div>
)

const zoomButton = 'flex size-5 shrink-0 items-center justify-center rounded-full border-2 border-[#868b94] bg-linear-to-b from-white to-[#e4e6ea]'

const StatusBar = () => (
  <footer className="flex h-6 shrink-0 items-center bg-linear-to-b from-[#e1e4e8] to-[#bcc1c6] pr-1 text-[#3b3f46]">
    <span className="w-[53px] pt-px pl-2">Ready</span>
    <span className="h-full w-px bg-[#80858f]" />
    <span className="ml-auto h-full w-px bg-[#80858f]" />
    <button type="button" aria-label="Normal view" className="ml-1 flex h-6 w-[23px] items-center justify-center rounded-sm border border-[#c2953c] bg-linear-to-b from-[#fcd668] to-[#ffee83]">
      <Icon w={17} h={14} crisp>
        <path d="M1 1h14v11H1zM1 5h14M1 8h14M5 1v11M10 1v11" fill="#fff" stroke="#666a70" strokeWidth="2" />
      </Icon>
    </button>
    <Tool label="Page layout view" width="w-6">
      <Icon w={17} h={14} crisp>
        <rect x="1" y="1" width="15" height="12" fill="#c4c7cc" stroke="#666a70" strokeWidth="2" />
        <rect x="4.500" y="2.500" width="8" height="9" fill="#fff" stroke="#666a70" />
        <path d="M6 5.500h5M6 7.500h5M6 9.500h5" stroke="#8f949d" />
      </Icon>
    </Tool>
    <Tool label="Page break preview" width="w-6">
      <Icon w={17} h={14} crisp>
        <rect x="1" y="1" width="15" height="12" fill="#b4b7bc" stroke="#666a70" strokeWidth="2" />
        <path d="M2 1h4v7H2zM8 1h4v7H8z" fill="#fff" stroke="#666a70" />
      </Icon>
    </Tool>
    <span className="w-12 pt-px pl-2">100%</span>
    <button type="button" aria-label="Zoom out" className={zoomButton}>
      <span className="h-0.5 w-2 bg-[#666a70]" />
    </button>
    <input
      type="range"
      aria-label="Zoom"
      defaultValue={50}
      className="w-[125px] appearance-none bg-[linear-gradient(#868b94,#868b94)] bg-size-[100%_1px] bg-center bg-no-repeat [&::-webkit-slider-thumb]:h-4 [&::-webkit-slider-thumb]:w-[11px] [&::-webkit-slider-thumb]:appearance-none [&::-webkit-slider-thumb]:rounded-b-md [&::-webkit-slider-thumb]:border-2 [&::-webkit-slider-thumb]:border-[#777c85] [&::-webkit-slider-thumb]:bg-[#f4f5f7]"
    />
    <button type="button" aria-label="Zoom in" className={zoomButton}>
      <Icon w={10} h={10} crisp>
        <path d="M5 0v10M0 5h10" stroke="#666a70" strokeWidth="2" />
      </Icon>
    </button>
  </footer>
)

const App: React.FC = () => (
  <div className="flex h-screen flex-col overflow-hidden bg-white font-['Open_Sans',sans-serif] text-[13px]">
    <TitleBar />
    <RibbonTabs />
    <Ribbon />
    <FormulaBar />
    <main className="flex min-h-0 flex-1 bg-[#eef0f4]">
      <Grid />
      <VerticalScroll />
      <div className="w-[3px] shrink-0" />
    </main>
    <SheetTabs />
    <StatusBar />
    <div className="flex h-0.5 shrink-0 bg-[#2a2729]">
      <div className="ml-[187px] w-[45px] bg-[#6a6769]" />
    </div>
  </div>
)

export default App
